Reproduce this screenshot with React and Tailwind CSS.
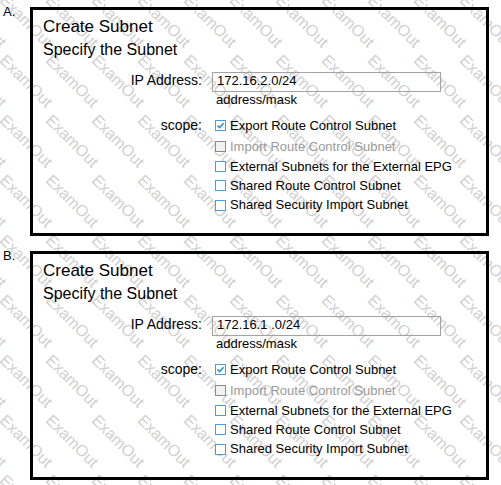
import React from "react";

const FONT = { fontFamily: '"Liberation Sans", Arial, sans-serif' };

function Watermark() {
  const items = [];
  for (let j = -1; j < 10; j++) {
    for (let i = -3; i < 12; i++) {
      items.push(
        <span
          key={`${i}-${j}`}
          className="absolute whitespace-nowrap text-[16px] leading-[16px] text-[#d0d0d0] origin-top-left rotate-45"
          style={{ left: 8 + 46 * i, top: -8 + 60 * j }}
        >
          ExamOut
        </span>
      );
    }
  }
  return <div className="absolute inset-0 pointer-events-none overflow-hidden">{items}</div>;
}

function Checkbox({ checked, disabled }) {
  if (disabled) {
    return <span className="box-border w-[11px] h-[11px] border border-[#8c8c8c] bg-[#f2f2f2] shrink-0" />;
  }
  return (
    <span className="relative box-border w-[11px] h-[11px] border border-[#3fa2e0] bg-white shrink-0 flex items-center justify-center">
      {checked && (
        <svg width="9" height="9" viewBox="0 0 9 9" className="block">
          <path d="M1.5 4.5 L3.6 6.6 L7.6 2.2" fill="none" stroke="#2f8fd4" strokeWidth="1.6" />
        </svg>
      )}
    </span>
  );
}

const OPTIONS = [
  { label: "Export Route Control Subnet", checked: true, h: "h-[21px]" },
  { label: "Import Route Control Subnet", disabled: true, h: "h-[21px]" },
  { label: "External Subnets for the External EPG", h: "h-[19px]" },
  { label: "Shared Route Control Subnet", h: "h-[19px]" },
  { label: "Shared Security Import Subnet", h: "h-[20px]" },
];

function Panel({ ip }) {
  return (
    <div className="box-border w-[459px] h-[229px] border-[3px] border-black pl-[10px] pt-[7px] text-black">
      <div className="text-[17px] leading-[20px]">Create Subnet</div>
      <div className="text-[16px] leading-[20px] mt-[3px]">Specify the Subnet</div>
      <div className="flex items-start mt-[12px]">
        <div className="w-[159px] shrink-0 text-right text-[14px] leading-[16px]">IP Address:</div>
        <div className="ml-[10px] flex flex-col">
          <div className="box-border w-[229px] h-[20px] border border-[#a3a3a3] pl-[4px] text-[13px] leading-[16px]">
            {ip}
          </div>
          <div className="pl-[4px] text-[13px] leading-[15px]">address/mask</div>
        </div>
      </div>
      <div className="flex items-start mt-[8px]">
        <div className="w-[159px] shrink-0 text-right text-[14px] leading-[20px]">scope:</div>
        <div className="ml-[10px] flex flex-col">
          {OPTIONS.map((o) => (
            <div key={o.label} className={`${o.h} flex items-center pl-[3px]`}>
              <Checkbox checked={o.checked} disabled={o.disabled} />
              <span
                className={`ml-[4px] text-[13px] leading-[20px] whitespace-nowrap ${
                  o.disabled ? "text-[#9a9a9a]" : "text-black"
                }`}
              >
                {o.label}
              </span>
            </div>
          ))}
        </div>
      </div>
    </div>
  );
}

function Section({ letter, ip, className }) {
  return (
    <div className={`flex items-start ${className || ""}`}>
      <div className="w-[30px] shrink-0 pl-[3px] -mt-[3px] text-[13px] leading-[15px]">{letter}</div>
      <Panel ip={ip} />
    </div>
  );
}

export default function App() {
  return (
    <div className="relative w-[501px] h-[485px] bg-white overflow-hidden" style={FONT}>
      <Watermark />
      <div className="relative z-10 pt-[7px]">
        <Section letter="A." ip="172.16.2.0/24" />
        <Section letter="B." ip="172.16.1 .0/24" className="mt-[15px]" />
      </div>
    </div>
  );
}
